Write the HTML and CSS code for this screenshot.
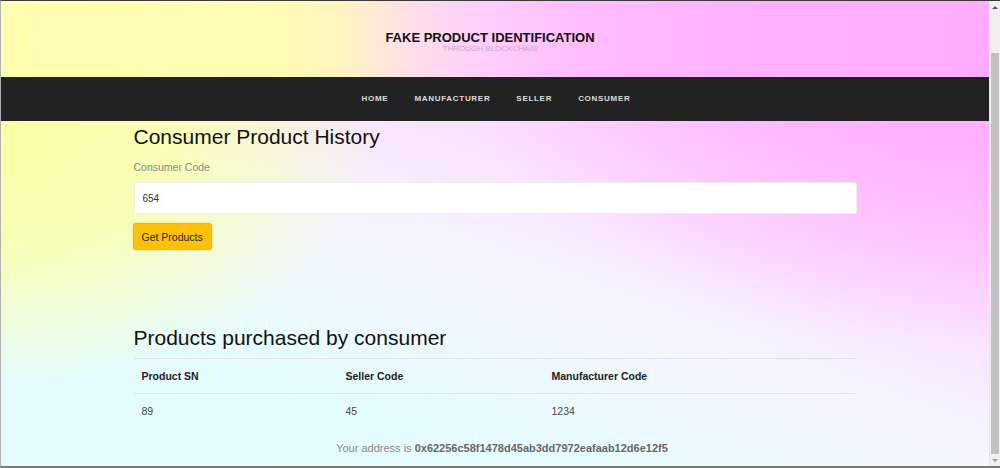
FILE: index.html
```html
<!DOCTYPE html>
<html lang="en">
<head>
<meta charset="utf-8">
<title>Consumer Product History</title>
<link rel="stylesheet" href="styles.css">
</head>
<body>
<div class="window">
  <div class="page">
    <header class="brand">
      <h1 class="brand-title">FAKE PRODUCT IDENTIFICATION</h1>
      <p class="brand-sub">THROUGH BLOCKCHAIN</p>
    </header>
    <nav class="nav">
      <a class="nav-link" href="#">HOME</a>
      <a class="nav-link" href="#">MANUFACTURER</a>
      <a class="nav-link" href="#">SELLER</a>
      <a class="nav-link" href="#">CONSUMER</a>
    </nav>
    <main class="container">
      <h2 class="title">Consumer Product History</h2>
      <label class="label" for="code">Consumer Code</label>
      <input class="input" id="code" type="text" value="654">
      <button class="btn" type="button">Get Products</button>
      <h2 class="title title-products">Products purchased by consumer</h2>
      <table class="table">
        <thead>
          <tr><th>Product SN</th><th>Seller Code</th><th>Manufacturer Code</th></tr>
        </thead>
        <tbody>
          <tr><td>89</td><td>45</td><td>1234</td></tr>
        </tbody>
      </table>
    </main>
    <footer class="footer">Your address is <b class="addr">0x62256c58f1478d45ab3dd7972eafaab12d6e12f5</b></footer>
  </div>
  <div class="scrollbar">
    <div class="sb-arrow sb-up"></div>
    <div class="sb-track"><div class="sb-thumb"></div></div>
    <div class="sb-arrow sb-down"></div>
  </div>
</div>
</body>
</html>
```
FILE: styles.css
```css
* { box-sizing: border-box; }
html, body { margin: 0; padding: 0; height: 100%; }
body {
  font-family: "Liberation Sans", Arial, sans-serif;
  color: #222;
  overflow: hidden;
}
.window {
  display: flex;
  height: 468px;
  border-top: 1px solid #3a3a3a;
  border-bottom: 2px solid #7a7a7a;
  border-left: 1px solid #b0b0b0;
  background:
    radial-gradient(ellipse 55% 70% at 100% 5%, rgba(255,168,255,1) 0%, rgba(255,172,255,0.85) 35%, rgba(255,190,255,0) 100%),
    radial-gradient(ellipse 38% 55% at 0% 28%, rgba(250,255,165,1) 0%, rgba(250,255,170,0.85) 45%, rgba(250,255,180,0) 100%),
    linear-gradient(200deg, #ffb4ff 0%, #fdd6ff 30%, #f4f6ff 55%, #e6fcff 75%, #e4fcff 100%);
}
.page { flex: 1; display: flex; flex-direction: column; min-width: 0; }
.brand {
  height: 76px;
  display: flex; flex-direction: column; align-items: center; justify-content: center;
  padding-top: 6px; padding-right: 10px;
  background: linear-gradient(90deg, #ffffb0 0%, #fffdb2 28%, #fff4c4 35%, #ffe0e8 41%, #ffd0fa 48%, #ffbeff 58%, #ffb2ff 75%, #ffacff 100%);
}
.brand-title { margin: 0; font-size: 13px; font-weight: bold; color: #111; line-height: 14px; }
.brand-sub { margin: -1px 0 0; font-size: 8px; color: #c8a8c8; line-height: 10px; }
.nav {
  height: 44px;
  background: #222;
  display: flex; justify-content: center; align-items: center; gap: 26px;
  padding-left: 2px; padding-bottom: 1px;
}
.nav-link { color: #ddd; text-decoration: none; font-size: 8px; font-weight: bold; letter-spacing: 0.7px; }
.container { width: 723px; margin: 0 auto; display: flex; flex-direction: column; align-items: flex-start; }
.title { margin: 4px 0 0; font-size: 21px; font-weight: normal; color: #111; line-height: 24px; }
.label { margin-top: 11px; font-size: 10.5px; color: #888; line-height: 14px; }
.input {
  margin-top: 8px;
  width: 100%; height: 32px;
  border: 1px solid #eee; border-radius: 2px;
  background: #fff;
  font: 10px "Liberation Sans", Arial, sans-serif; color: #333;
  padding: 0 8px;
}
.btn {
  margin-top: 9px; margin-left: -1px;
  height: 27px; padding: 0 8px;
  background: #ffc107; border: 1px solid #f3b500; border-radius: 3px;
  font: 10.5px "Liberation Sans", Arial, sans-serif; color: #222;
  box-shadow: 0 0 2px rgba(220,160,0,0.5);
}
.title-products { margin-top: 76px; }
.table { margin-top: 8px; width: 100%; border-collapse: collapse; font-size: 10.5px; }
.table th, .table td { text-align: left; padding: 0 8px; border-top: 1px solid #dfe3e8; }
.table th { height: 35px; font-weight: bold; color: #222; }
.table td { height: 35px; color: #444; }
.table th:nth-child(1) { width: 204px; }
.table th:nth-child(2) { width: 206px; }
.footer { margin-top: 13px; text-align: center; font-size: 11px; color: #888; padding-left: 14px; }
.addr { color: #666; }
.scrollbar { width: 11px; background: #f0f0f0; display: flex; flex-direction: column; border-left: 1px solid #e6e6e6; }
.sb-arrow { height: 12px; display: flex; align-items: center; justify-content: center; }
.sb-up::before { content: ""; border-left: 3px solid transparent; border-right: 3px solid transparent; border-bottom: 3px solid #555; }
.sb-down::before { content: ""; border-left: 3px solid transparent; border-right: 3px solid transparent; border-top: 3px solid #a0a0a0; }
.sb-track { flex: 1; padding: 40px 1px 0 1px; display: flex; }
.sb-thumb { flex: 1; background: #c1c1c1; }
```
